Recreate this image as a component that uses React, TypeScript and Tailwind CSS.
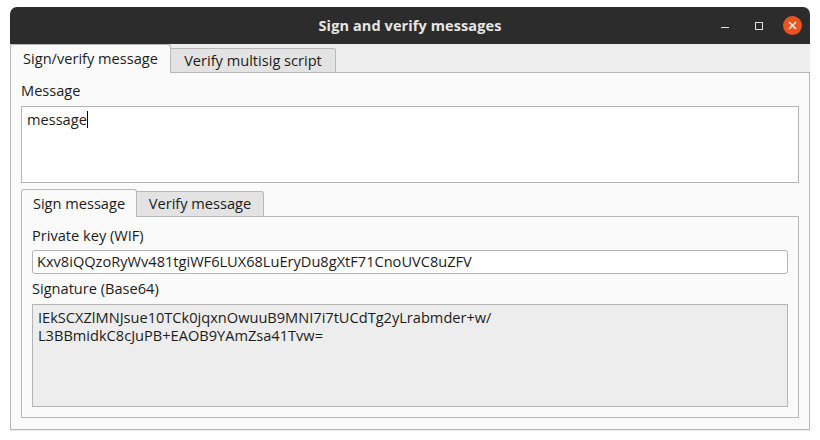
import React from "react";

const font = { fontFamily: '"Open Sans", "Noto Sans", sans-serif' };

export default function App() {
  return (
    <div className="w-[820px] h-[440px] bg-white pt-[7px] pl-[10px]" style={font}>
      <div className="w-[800px] h-[424px] rounded-t-[7px] overflow-hidden bg-[#ededed] flex flex-col">
        {/* Title bar */}
        <div className="h-[37px] bg-[#2c2c2c] relative flex items-center justify-center shrink-0">
          <span className="text-[14.5px] font-bold text-[#e6e6e6] tracking-[0.1px]">Sign and verify messages</span>
          <div className="absolute right-[8px] top-0 h-[37px] flex items-center">
            <div className="w-[8px] h-[1px] bg-[#e0e0e0] mt-[4px] mr-[26px]" />
            <div className="w-[8px] h-[8px] border border-[#e0e0e0] mr-[20px]" />
            <div className="w-[19px] h-[19px] rounded-full bg-[#e95420] flex items-center justify-center">
              <svg width="9" height="9" viewBox="0 0 9 9">
                <path d="M1 1L8 8M8 1L1 8" stroke="#fff" strokeWidth="1.4" />
              </svg>
            </div>
          </div>
        </div>
        {/* Tabs */}
        <div className="h-[28px] flex items-end shrink-0 relative z-10">
          <div className="w-[161px] bg-[#fafafa] border border-b-0 border-[#b8b8b8] rounded-t-[3px] flex items-center justify-center text-[14.6px] text-[#1c1c1c] -mb-[1px] h-[29px]">
            Sign/verify message
          </div>
          <div className="w-[165px] h-[24px] bg-[#e3e3e3] border border-l-0 border-b-0 border-[#b8b8b8] rounded-tr-[3px] flex items-center justify-center text-[14.6px] text-[#1c1c1c]">
            Verify multisig script
          </div>
        </div>
        <div className="h-[358px] bg-[#fafafa] border border-[#b8b8b8] pl-[10px] pr-[10px] shrink-0">
          <div className="h-[33px] flex items-center pt-[3px] text-[14.6px] text-[#1c1c1c]">Message</div>
          <div className="h-[77px] bg-white border border-[#b4b4b4] px-[5px] pt-[1px] text-[14.6px] text-[#1c1c1c] leading-[22px]">
            message<span className="inline-block w-[1px] h-[17px] bg-black align-[-3px]" />
          </div>
          {/* Inner tabs */}
          <div className="h-[27px] flex items-end mt-[6px] relative z-10">
            <div className="w-[116px] h-[28px] bg-[#fafafa] border border-b-0 border-[#b8b8b8] rounded-t-[3px] flex items-center justify-center text-[14.6px] text-[#1c1c1c] -mb-[1px]">
              Sign message
            </div>
            <div className="w-[127px] h-[25px] bg-[#e3e3e3] border border-l-0 border-b-0 border-[#b8b8b8] rounded-tr-[3px] flex items-center justify-center text-[14.6px] text-[#1c1c1c]">
              Verify message
            </div>
          </div>
          <div className="h-[202px] border border-[#b8b8b8] bg-[#fafafa] px-[10px]">
            <div className="h-[33px] flex items-center text-[14.6px] text-[#1c1c1c] pt-[4px]">Private key (WIF)</div>
            <div className="h-[24px] bg-white border border-[#b4b4b4] rounded-[3px] flex items-center px-[4px] text-[14.6px] text-[#1c1c1c]">
              Kxv8iQQzoRyWv481tgiWF6LUX68LuEryDu8gXtF71CnoUVC8uZFV
            </div>
            <div className="h-[30px] flex items-center text-[14.6px] text-[#1c1c1c]">Signature (Base64)</div>
            <div className="h-[103px] bg-[#ededed] border border-[#b4b4b4] px-[5px] pt-[3px] text-[14.6px] text-[#1c1c1c] leading-[18px]">
              <div>IEkSCXZlMNJsue10TCk0jqxnOwuuB9MNI7i7tUCdTg2yLrabmder+w/</div>
              <div>L3BBmidkC8cJuPB+EAOB9YAmZsa41Tvw=</div>
            </div>
          </div>
        </div>
      </div>
    </div>
  );
}
